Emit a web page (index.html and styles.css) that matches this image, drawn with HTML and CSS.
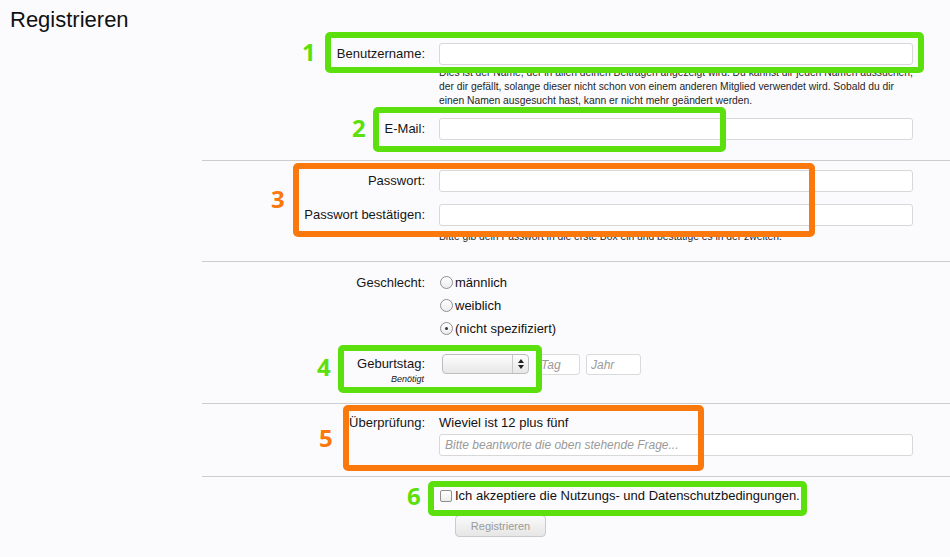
FILE: index.html
```html
<!DOCTYPE html>
<html lang="de">
<head>
<meta charset="utf-8">
<title>Registrieren</title>
<link rel="stylesheet" href="styles.css">
</head>
<body>
<h1 class="title">Registrieren</h1>
<form class="form">
  <section class="sec sec-account">
    <div class="row">
      <label class="lbl">Benutzername:</label>
      <input class="input" type="text">
    </div>
    <div class="row row-help">
      <span></span>
      <p class="help">Dies ist der Name, der in allen deinen Beiträgen angezeigt wird. Du kannst dir jeden Namen aussuchen,<br>der dir gefällt, solange dieser nicht schon von einem anderen Mitglied verwendet wird. Sobald du dir<br>einen Namen ausgesucht hast, kann er nicht mehr geändert werden.</p>
    </div>
    <div class="row row-email">
      <label class="lbl">E-Mail:</label>
      <input class="input" type="text">
    </div>
  </section>

  <section class="sec sec-pass">
    <div class="row">
      <label class="lbl">Passwort:</label>
      <input class="input" type="password">
    </div>
    <div class="row row-pass2">
      <label class="lbl">Passwort bestätigen:</label>
      <input class="input" type="password">
    </div>
    <div class="row row-help2">
      <span></span>
      <p class="help">Bitte gib dein Passwort in die erste Box ein und bestätige es in der zweiten.</p>
    </div>
  </section>

  <section class="sec sec-person">
    <div class="row row-radio">
      <span class="lbl">Geschlecht:</span>
      <span class="opt"><span class="radio"></span>männlich</span>
    </div>
    <div class="row row-radio">
      <span></span>
      <span class="opt"><span class="radio"></span>weiblich</span>
    </div>
    <div class="row row-radio">
      <span></span>
      <span class="opt"><span class="radio on"></span>(nicht spezifiziert)</span>
    </div>
    <div class="row row-birth">
      <div class="lbl-stack">
        <span class="lbl lbl-birth">Geburtstag:</span>
        <span class="req">Benötigt</span>
      </div>
      <div class="birth">
        <span class="select"><span class="sel-arrows"><span class="up"></span><span class="down"></span></span></span>
        <input class="small tag" type="text" placeholder="Tag">
        <input class="small jahr" type="text" placeholder="Jahr">
      </div>
    </div>
  </section>

  <section class="sec sec-check">
    <div class="row row-q">
      <span class="lbl">Überprüfung:</span>
      <span class="question">Wieviel ist 12 plus fünf</span>
    </div>
    <div class="row row-answer">
      <span></span>
      <input class="input answer" type="text" placeholder="Bitte beantworte die oben stehende Frage...">
    </div>
  </section>

  <section class="sec sec-submit">
    <div class="row row-agree">
      <span></span>
      <span class="agree"><span class="checkbox"></span>Ich akzeptiere die Nutzungs- und Datenschutzbedingungen.</span>
    </div>
    <div class="row row-btn">
      <span></span>
      <span><button class="btn" type="button">Registrieren</button></span>
    </div>
  </section>
</form>

<div class="mark green m1"></div>
<div class="mark green m2"></div>
<div class="mark orange m3"></div>
<div class="mark green m4"></div>
<div class="mark orange m5"></div>
<div class="mark green m6"></div>

<span class="num green-t n1">1</span>
<span class="num green-t n2">2</span>
<span class="num orange-t n3">3</span>
<span class="num green-t n4">4</span>
<span class="num orange-t n5">5</span>
<span class="num green-t n6">6</span>
</body>
</html>
```

FILE: styles.css
```css
* { box-sizing: border-box; }

body {
  margin: 0;
  background: #fbfbfd;
  font-family: "Liberation Sans", Arial, sans-serif;
  color: #1c1c1c;
  position: relative;
  height: 557px;
  overflow: hidden;
}

.title {
  margin: 0;
  padding: 7px 0 0 10px;
  font-size: 22px;
  font-weight: normal;
  line-height: 26px;
  color: #111;
}

.form {
  margin-left: 202px;
}

.sec {
  border-top: 1px solid #cdcdcd;
}

.sec-account {
  border-top: none;
  padding: 10px 0 20px;
}

.sec-pass { padding: 9px 0 17px; }
.sec-person { padding: 9px 0 19px; }
.sec-check { padding: 10px 0 20px; }
.sec-submit { padding: 10px 0 0; }

.row {
  display: grid;
  grid-template-columns: 223px 474px;
  column-gap: 14px;
  align-items: center;
}

.lbl {
  text-align: right;
  font-size: 13px;
  line-height: 16px;
  color: #161616;
}

.input {
  display: block;
  width: 474px;
  height: 22px;
  margin: 0;
  border: 1px solid #d8d8d8;
  border-radius: 3px;
  background: #fff;
  font-family: inherit;
  font-size: 12px;
  padding: 0 5px;
  outline: none;
}

.help {
  margin: 0;
  font-size: 10.3px;
  line-height: 14px;
  color: #262626;
  white-space: nowrap;
}

.row-help { margin-top: 1px; }
.row-email { margin-top: 10px; }
.row-pass2 { margin-top: 12px; }
.row-help2 { margin-top: 4px; }

/* radios */
.row-radio { height: 23px; }

.opt {
  display: flex;
  align-items: center;
  font-size: 13px;
  line-height: 16px;
  padding-left: 1px;
  color: #111;
}

.radio {
  position: relative;
  width: 13px;
  height: 13px;
  margin-right: 2px;
  border: 1px solid #8f8f8f;
  border-radius: 50%;
  background: linear-gradient(#ffffff, #ececec);
  flex: none;
}

.radio.on::after {
  content: "";
  position: absolute;
  left: 4px;
  top: 4px;
  width: 3px;
  height: 3px;
  border-radius: 50%;
  background: #333;
}

/* birthday */
.row-birth {
  margin-top: 14px;
  align-items: start;
}

.lbl-stack {
  display: flex;
  flex-direction: column;
  align-items: flex-end;
}

.lbl-birth { line-height: 20px; }

.req {
  font-size: 9px;
  line-height: 10px;
  font-style: italic;
  color: #1a1a1a;
  padding-right: 1px;
}

.birth {
  display: flex;
  align-items: flex-start;
}

.select {
  position: relative;
  display: block;
  width: 87px;
  height: 20px;
  margin-left: 3px;
  border: 1px solid #bdbdbd;
  border-radius: 4px;
  background: linear-gradient(#fdfdfd, #e7e7e7);
}

.sel-arrows {
  position: absolute;
  right: 0;
  top: 0;
  width: 16px;
  height: 18px;
  border-left: 1px solid #c9c9c9;
  display: flex;
  flex-direction: column;
  align-items: center;
  justify-content: center;
  gap: 2px;
}

.up {
  width: 0;
  height: 0;
  border-left: 3px solid transparent;
  border-right: 3px solid transparent;
  border-bottom: 4px solid #222;
}

.down {
  width: 0;
  height: 0;
  border-left: 3px solid transparent;
  border-right: 3px solid transparent;
  border-top: 4px solid #222;
}

.small {
  display: block;
  height: 21px;
  margin: 0;
  border: 1px solid #dadada;
  border-radius: 3px;
  background: #fff;
  font-family: inherit;
  font-size: 12px;
  padding: 0 4px;
  outline: none;
}

.small::placeholder,
.answer::placeholder {
  font-style: italic;
  color: #9a9a9a;
}

.tag { width: 44px; margin-left: 7px; }
.jahr { width: 55px; margin-left: 6px; }

/* verification */
.row-q { line-height: 18px; }

.question {
  font-size: 13px;
  line-height: 18px;
  color: #111;
}

.row-answer { margin-top: 2px; }

.answer { font-size: 12px; }

/* submit */
.agree {
  display: flex;
  align-items: center;
  font-size: 13px;
  line-height: 18px;
  color: #111;
  padding-left: 1px;
}

.checkbox {
  width: 12px;
  height: 12px;
  margin-right: 3px;
  border: 1px solid #8f8f8f;
  border-radius: 2px;
  background: linear-gradient(#ffffff, #ededed);
  flex: none;
}

.row-btn { margin-top: 10px; }

.btn {
  display: block;
  margin-left: 16px;
  width: 91px;
  height: 22px;
  border: 1px solid #cacaca;
  border-radius: 4px;
  background: linear-gradient(#fafafa, #e6e6e6);
  color: #9a9a9a;
  font-family: inherit;
  font-size: 11px;
  padding: 0;
}

/* annotation overlays */
.mark {
  position: absolute;
  border: 6px solid;
  border-radius: 5px;
}

.green { border-color: #5ce00d; }
.orange { border-color: #fb780c; }

.m1 { left: 325px; top: 32px; width: 599px; height: 41px; }
.m2 { left: 373px; top: 107px; width: 353px; height: 45px; }
.m3 { left: 293px; top: 163px; width: 522px; height: 74px; }
.m4 { left: 338px; top: 345px; width: 204px; height: 48px; }
.m5 { left: 343px; top: 405px; width: 361px; height: 66px; }
.m6 { left: 428px; top: 481px; width: 379px; height: 35px; }

.num {
  position: absolute;
  font-family: "Open Sans", "Liberation Sans", sans-serif;
  font-weight: 700;
  font-size: 24px;
  line-height: 24px;
}

.green-t { color: #5ce00d; }
.orange-t { color: #fb780c; }

.n1 { left: 302px; top: 40px; }
.n2 { left: 352px; top: 116px; }
.n3 { left: 271px; top: 187px; }
.n4 { left: 317px; top: 355px; }
.n5 { left: 319px; top: 426px; }
.n6 { left: 407px; top: 484px; }
```
